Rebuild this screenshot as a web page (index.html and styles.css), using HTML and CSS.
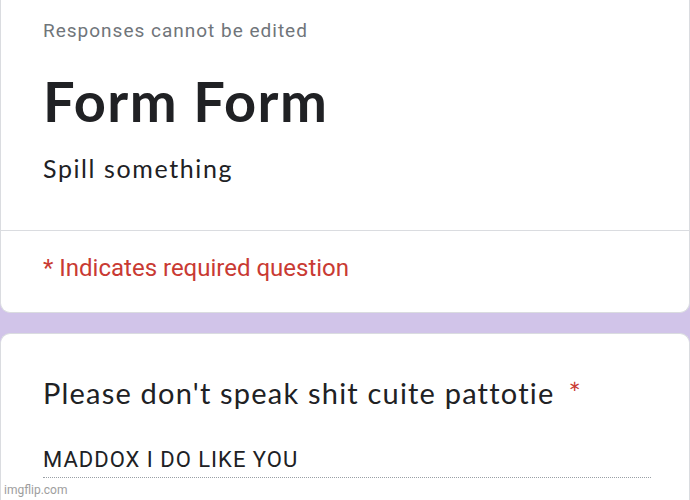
FILE: index.html
```html
<!DOCTYPE html>
<html lang="en">
<head>
  <meta charset="UTF-8" />
  <meta name="viewport" content="width=device-width, initial-scale=1.0" />
  <title>Form Form</title>
  <link rel="stylesheet" href="styles.css">
</head>
<body>

  <main class="form-page">
    <section class="card card-header">
      <div class="header-top">
        <p class="notice">Responses cannot be edited</p>
        <h1 class="form-title">Form Form</h1>
        <p class="form-desc">Spill something</p>
      </div>
      <div class="header-bottom">
        <p class="required-note">* Indicates required question</p>
      </div>
    </section>

    <section class="card card-question">
      <div class="question-title">
        Please don't speak shit cuite pattotie<span class="asterisk">*</span>
      </div>
      <div class="answer">MADDOX I DO LIKE YOU</div>
    </section>
  </main>

  <div class="watermark">imgflip.com</div>

</body>
</html>
```

FILE: styles.css
```css
* {
  box-sizing: border-box;
}

body {
  margin: 0;
  background-color: #d1c4e9;
  font-family: Roboto, "Liberation Sans", sans-serif;
  color: #202124;
  height: 500px;
  overflow: hidden;
}

.form-page {
  display: flex;
  flex-direction: column;
  gap: 20px;
  height: 500px;
}

/* Cartões brancos do formulário */
.card {
  background-color: #fff;
  border: 1px solid #dadce0;
  width: 690px;
}

.card-header {
  border-top: none;
  border-radius: 0 0 10px 10px;
}

.header-top {
  padding: 19px 42px 47px;
  border-bottom: 1px solid #dadce0;
}

.notice {
  margin: 0;
  font-size: 19px;
  line-height: 24px;
  color: #70757a;
  letter-spacing: 1px;
}

.form-title {
  margin: 26px 0 0;
  font-family: Lato, "Noto Sans", sans-serif;
  font-weight: 700;
  font-size: 56px;
  line-height: 64px;
  letter-spacing: 1.5px;
}

.form-desc {
  margin: 20px 0 0;
  font-family: Lato, "Noto Sans", sans-serif;
  font-size: 25px;
  line-height: 30px;
  letter-spacing: 1.6px;
}

.header-bottom {
  padding: 24px 42px 31px;
}

.required-note {
  margin: 0;
  font-size: 24px;
  line-height: 26px;
  color: #c93a33;
}

.card-question {
  flex: 1;
  border-bottom: none;
  border-radius: 10px 10px 0 0;
  padding: 42px 42px 0;
}

.question-title {
  font-family: Lato, "Noto Sans", sans-serif;
  font-size: 29px;
  line-height: 34px;
  letter-spacing: 1.2px;
}

.asterisk {
  color: #c93a33;
  margin-left: 14px;
}

.answer {
  margin-top: 36px;
  width: 608px;
  font-size: 22px;
  line-height: 28px;
  letter-spacing: 1px;
  padding-bottom: 3px;
  border-bottom: 1px dotted #9aa0a6;
}

/* Marca d'água sobreposta */
.watermark {
  position: absolute;
  left: 4px;
  top: 483px;
  font-family: Roboto, sans-serif;
  font-size: 12px;
  color: #9e9e9e;
}
```
